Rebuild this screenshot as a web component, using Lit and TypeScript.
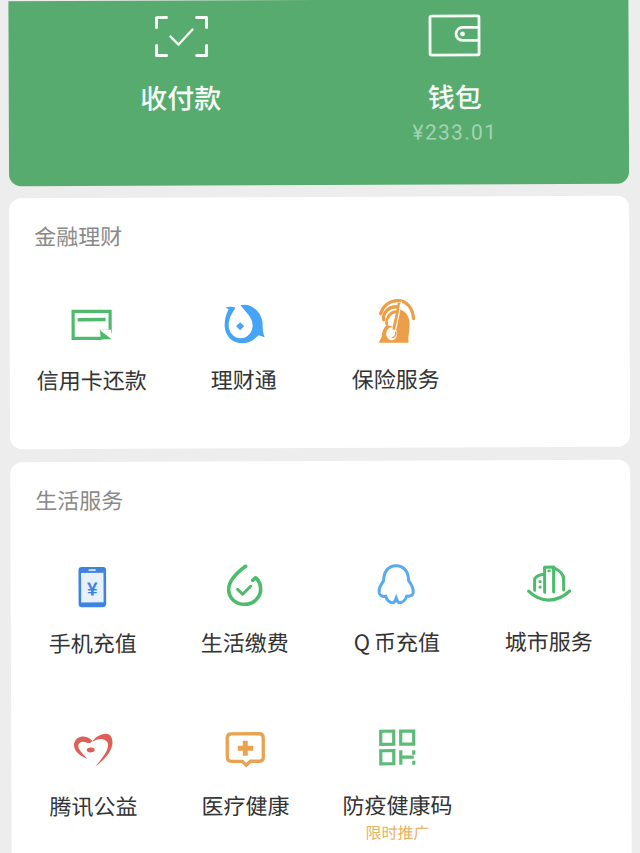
import { LitElement, html, css, svg } from "lit";
import { customElement } from "lit/decorators.js";

const GREEN = "#4dbb6b";

const icons: Record<string, { box: string; art: unknown }> = {
  card: { box: "70 301 44 44", art: svg`
    <path d="M73.5 311.5H110.5V331.5H102L103 338.5H73.5Z" fill="none" stroke="${GREEN}" stroke-width="3.2" stroke-linejoin="miter"/>
    <path d="M101 330H111.5V339.5H111.5L112 340H102Z" fill="#fff"/>
    <path d="M101 331L112 339.5H101Z" fill="${GREEN}"/>
    <rect x="78" y="318" width="28" height="3.5" fill="${GREEN}"/>` },
  licai: { box: "222 301 44 44", art: svg`
    <path d="M241 306C252 303 263 314 263 325C263 329 263 333 265 338L259 336C254 341 248 344 242 344C232 344 225 336 225 326C225 319 227 314 229 310L226 308C230 307 233 307 236 308.500C234 312 229 318 229 326C229 333 234 339 241 339C248 339 253 333 253 326C253 318 246 313 241 306Z" fill="#45a4f5"/>
    <path d="M240.500 323L244.500 327L240.500 331L236.500 327Z" fill="#45a4f5"/>` },
  ins: { box: "373 301 44 44", art: svg`
    <path d="M398 310C405 312 409 318 409 325C409 332 407 338 408 344H378L381 338C381 333 383 329 386 326L392 328L397 310Z" fill="#ec9f48"/>
    <ellipse cx="391" cy="335" rx="5.500" ry="6.500" fill="#fff"/>
    <path d="M395 333C396 336 394 339 391 339" fill="none" stroke="#ec9f48" stroke-width="1.600"/>
    <g fill="none" stroke="#ec9f48" stroke-linecap="round">
      <path d="M380 315C383 306 390 302 397 302C406 302 412 309 413 320" stroke-width="3.200"/>
      <path d="M383 321C382 314 388 308 396 308" stroke-width="3.400"/>
      <path d="M386 325C386 318 390 313 396 313" stroke-width="3"/>
    </g>
    <path d="M401 303L395 331" fill="none" stroke="#fff" stroke-width="1.200"/>
    <path d="M398.500 304L393 331" fill="none" stroke="#ec9f48" stroke-width="2.400"/>
    <circle cx="388.500" cy="322" r="1.500" fill="#fff"/>` },
  phone: { box: "72 565 44 44", art: svg`
    <rect x="81.200" y="568.500" width="25" height="37.500" rx="2" fill="#e8f0fc" stroke="#3e83e0" stroke-width="2.600"/>
    <rect x="81" y="568" width="25.500" height="5" fill="#3e83e0"/>
    <rect x="81" y="602.500" width="25.500" height="3" fill="#3e83e0"/>
    <rect x="90" y="569.500" width="7" height="1.400" fill="#fff"/>
    <text x="93.700" y="595.500" text-anchor="middle" font-family="'Liberation Sans',sans-serif" font-size="19" font-weight="700" fill="#3e83e0">¥</text>` },
  life: { box: "224 565 44 44", art: svg`
    <path d="M247 567C236 575 230 582 230 590C230 599 237 605 246 605C255 605 262 598 262 590C262 585 260 581 257 578.500L254 581" fill="none" stroke="${GREEN}" stroke-width="3.600" stroke-linecap="round" stroke-linejoin="round"/>
    <path d="M239 590L244 595L252 587" fill="none" stroke="${GREEN}" stroke-width="3" stroke-linecap="round" stroke-linejoin="round"/>` },
  qq: { box: "375 565 44 44", art: svg`
    <path d="M396.500 567C388 567 384 574 384 582C381 586 379 590 379.500 594C380 597 383 598 386 597.500C387 601 390 604 393 604C395 604 396 601 396.500 599.500C397 601 398 604 400 604C403 604 406 601 407 597.500C410 598 413 597 413.500 594C414 590 412 586 409 582C409 574 405 567 396.500 567Z" fill="none" stroke="#57abf0" stroke-width="3"/>` },
  city: { box: "526 565 44 44", art: svg`
    <g fill="none" stroke="${GREEN}" stroke-width="3" stroke-linejoin="round" stroke-linecap="round">
      <path d="M534 592V582C534 579 536 577 543 576"/>
      <path d="M544 594V569H553V594"/>
      <path d="M554 570C560 573 563 577 563 581V592"/>
    </g>
    <path d="M528 593C540 605 556 605 569 593" fill="none" stroke="${GREEN}" stroke-width="3.200" stroke-linecap="round"/>
    <path d="M538 582h2.800v2.800h-2.800zM538 587.500h2.800v2.800h-2.800zM547 571.500h3v2.600h-3z" fill="${GREEN}"/>` },
  heart: { box: "72 728 44 44", art: svg`
    <path d="M96 767C104 757 110 750 108.500 743C106 738 99 738 93 742C96 737 102 734 107 734C112 734 114 740 113 745C111 755 103 761 96 767Z" fill="#de5f56"/>
    <path d="M93 741C89 737 85 736 81 737C77 738 74 742 75 747C76 752 81 756 88 759C84 754 79 750 79 746C79 743 82 741 85 742C88 742 90 745 93 741Z" fill="#de5f56"/>
    <ellipse cx="91.500" cy="750" rx="4" ry="2.500" fill="#de5f56"/>` },
  med: { box: "224 728 44 44", art: svg`
    <path d="M232 734.500H260C262.500 734.500 264 736 264 738.500V758C264 760.500 262.500 762 260 762H251L247 766L243 762H232C229.500 762 228 760.500 228 758V738.500C228 736 229.500 734.500 232 734.500Z" fill="none" stroke="#e9a350" stroke-width="3.300"/>
    <path d="M243.500 741.500H248.500V746.500H254V751.500H248.500V756.500H243.500V751.500H238.500V746.500H243.500Z" fill="#e9a350"/>` },
  qr: { box: "375 728 44 44", art: svg`
    <g fill="none" stroke="#5cbb76" stroke-width="3.200">
      <rect x="380.500" y="732.500" width="13" height="13"/>
      <rect x="400.500" y="732.500" width="13" height="13"/>
      <rect x="380.500" y="752" width="13" height="13"/>
      <path d="M400.500 751.500V766M400.500 758.500H413.500M413.500 751.500V756M413.500 762V766"/>
    </g>` },
};

const finance = [
  { icon: "card", label: "信用卡还款" },
  { icon: "licai", label: "理财通" },
  { icon: "ins", label: "保险服务" },
];
const life = [
  { icon: "phone", label: "手机充值" },
  { icon: "life", label: "生活缴费" },
  { icon: "qq", label: "Q 币充值" },
  { icon: "city", label: "城市服务" },
  { icon: "heart", label: "腾讯公益" },
  { icon: "med", label: "医疗健康" },
  { icon: "qr", label: "防疫健康码", sub: "限时推广" },
];

@customElement("app-root")
export class AppRoot extends LitElement {
  static styles = css`
    :host {
      display: block;
      width: 640px;
      height: 853px;
      overflow: hidden;
      background: #ededed;
      font-family: "Noto Sans CJK SC", "Noto Sans", sans-serif;
    }
    .page {
      display: flex;
      flex-direction: column;
      gap: 12px;
      padding: 0 10px;
      transform: rotate(-0.22deg);
      transform-origin: 320px 420px;
    }
    .hero {
      height: 185px;
      box-sizing: border-box;
      background: #57ab6e;
      border-radius: 0 0 12px 12px;
      display: grid;
      grid-template-columns: 274px 274px;
      padding: 13px 0 0 35px;
    }
    .hero-item {
      display: flex;
      flex-direction: column;
      align-items: center;
      color: #fff;
    }
    .hero-icon {
      width: 56px;
      height: 46px;
      display: block;
    }
    .hero-label {
      margin-top: 18px;
      font-size: 27px;
      line-height: 40px;
      font-weight: 500;
      color: #f6fbf7;
    }
    .hero-sub {
      margin-top: 3px;
      font-family: Roboto, "Noto Sans", sans-serif;
      font-size: 21px;
      line-height: 26px;
      letter-spacing: 1.3px;
      color: #a4d3b1;
    }
    .card {
      background: #fff;
      border-radius: 12px;
      padding: 22px 6px 0;
    }
    .finance { height: 229px; }
    .life { height: 500px; margin-top: 0.5px; }
    .title {
      font-size: 22px;
      line-height: 30px;
      color: #8a8a8a;
      padding-left: 19px;
    }
    .grid {
      display: grid;
      grid-template-columns: repeat(4, 152px);
      row-gap: 69px;
      margin-top: 51px;
    }
    .item {
      display: flex;
      flex-direction: column;
      align-items: center;
      height: 94px;
      position: relative;
    }
    .icon {
      width: 44px;
      height: 44px;
      overflow: visible;
      display: block;
    }
    .label {
      margin-top: 18.5px;
      font-size: 22px;
      line-height: 30px;
      color: #333;
      white-space: nowrap;
      word-spacing: -1px;
    }
    .sub {
      position: absolute;
      top: 94px;
      left: 0;
      right: 0;
      text-align: center;
      font-size: 16px;
      line-height: 22px;
      color: #e8b263;
    }
  `;

  private item(it: { icon: string; label: string; sub?: string }) {
    const ic = icons[it.icon];
    return html`<div class="item">
      <svg class="icon" viewBox=${ic.box}>${ic.art}</svg>
      <div class="label">${it.label}</div>
      ${it.sub ? html`<div class="sub">${it.sub}</div>` : ""}
    </div>`;
  }

  render() {
    return html`<div class="page">
      <section class="hero">
        <div class="hero-item">
          <svg class="hero-icon" viewBox="153 14 56 46">
            <g fill="none" stroke="#f6fbf7" stroke-width="3" stroke-linejoin="round" stroke-linecap="round">
              <path d="M157 28V18H167M197 18H207V28M157 46V56H167M197 56H207V46"/>
              <path d="M171 37L179 45L193 30" stroke-width="2.4"/>
            </g>
          </svg>
          <div class="hero-label">收付款</div>
        </div>
        <div class="hero-item">
          <svg class="hero-icon" viewBox="427 13 56 46">
            <g fill="none" stroke="#f6fbf7" stroke-width="2.8" stroke-linejoin="round">
              <rect x="430.500" y="16.500" width="49" height="39" rx="1.5"/>
              <path d="M479.500 28H463A6 6 0 0 0 463 41H479.500"/>
            </g>
            <circle cx="463" cy="34.500" r="2.400" fill="#f6fbf7"/>
          </svg>
          <div class="hero-label">钱包</div>
          <div class="hero-sub">¥233.01</div>
        </div>
      </section>
      <section class="card finance">
        <div class="title">金融理财</div>
        <div class="grid">${finance.map((i) => this.item(i))}</div>
      </section>
      <section class="card life">
        <div class="title">生活服务</div>
        <div class="grid">${life.map((i) => this.item(i))}</div>
      </section>
    </div>`;
  }
}
